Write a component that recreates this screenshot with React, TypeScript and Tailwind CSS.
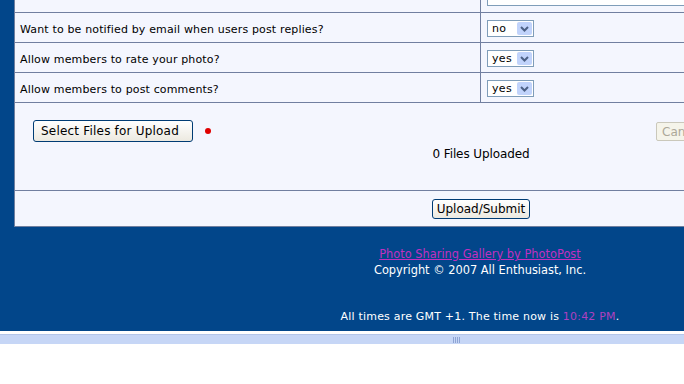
import React from "react";

const verd = { fontFamily: '"DejaVu Sans", Verdana, sans-serif' };
const tah = { fontFamily: '"DejaVu Sans", Tahoma, sans-serif' };

function Sel({ v }: { v: string }) {
  return (
    <div className="flex h-[17px] w-[47px] items-center border border-[#7f9db9] bg-white">
      <span className="flex-1 pl-[4px] text-[11px] leading-none tracking-[0.3px] text-black" style={verd}>
        {v}
      </span>
      <span className="mr-[1px] flex h-[13px] w-[15px] items-center justify-center rounded-[2px] bg-[#c1d3fb]">
        <svg width="9" height="6" viewBox="0 0 9 6">
          <path d="M1 1 L4.5 4.5 L8 1" stroke="#4d6185" strokeWidth="2" fill="none" />
        </svg>
      </span>
    </div>
  );
}

function Row({ label, v }: { label: string; v: string }) {
  return (
    <div className="flex h-[30px] border-b border-[#717fa0]">
      <div
        className="flex w-[466px] items-center border-r border-[#717fa0] pl-[5px] pt-[5px] text-[11px] tracking-[0.15px] text-black"
        style={verd}
      >
        {label}
      </div>
      <div className="flex flex-1 items-center pl-[6px] pt-[2px]">
        <Sel v={v} />
      </div>
    </div>
  );
}

export default function App() {
  return (
    <div className="h-[384px] w-[684px] overflow-hidden bg-white">
      <div className="w-[960px] bg-[#02468a] px-[14px]">
        <div className="border-b border-l border-[#6f7f9f] bg-[#f4f6fe]">
          <div className="flex h-[13px] border-b border-[#717fa0]">
            <div className="w-[466px] border-r border-[#717fa0]" />
            <div className="flex-1 pl-[6px]">
              <div className="h-[6px] border-x border-b border-[#7f9db9] bg-white" />
            </div>
          </div>
          <Row label="Want to be notified by email when users post replies?" v="no" />
          <Row label="Allow members to rate your photo?" v="yes" />
          <Row label="Allow members to post comments?" v="yes" />
          <div className="relative h-[88px] border-b border-[#717fa0]">
            <div className="flex items-center pl-[18px] pt-[17px]">
              <button
                className="h-[22px] w-[160px] rounded-[3px] border border-[#003c74] bg-gradient-to-b from-white to-[#ece9e0] pr-[6px] text-[12px] tracking-[0.2px] text-black"
                style={tah}
              >
                Select Files for Upload
              </button>
              <span className="ml-[12px] h-[6px] w-[6px] rounded-full bg-[#e00000]" />
            </div>
            <button
              className="absolute left-[641px] top-[19px] h-[19px] w-[60px] rounded-[2px] border border-[#cac8bb] bg-[#f5f4ea] pl-[5px] text-left text-[12px] text-[#aca899]"
              style={tah}
            >
              Cancel
            </button>
            <div className="mt-[3px] w-[932px] text-center text-[12px] tracking-[-0.1px] text-black" style={tah}>
              0 Files Uploaded
            </div>
          </div>
          <div className="flex h-[35px] w-[932px] items-start justify-center pt-[8px]">
            <button
              className="h-[20px] w-[98px] rounded-[3px] border border-[#003c74] bg-gradient-to-b from-white to-[#ece9e0] text-[12px] text-black"
              style={tah}
            >
              Upload/Submit
            </button>
          </div>
        </div>
        <div className="flex w-[932px] flex-col items-center pt-[19px] text-[11.4px]" style={tah}>
          <a className="leading-[16px] text-[#c030c0] underline">Photo Sharing Gallery by PhotoPost</a>
          <div className="leading-[16px] text-white">Copyright © 2007 All Enthusiast, Inc.</div>
          <div className="mt-[32px] text-[11px] leading-[14px] tracking-[0.2px] text-white" style={verd}>
            All times are GMT +1. The time now is <span className="text-[#b040c0]">10:42 PM</span>.
          </div>
          <div className="h-[7px]" />
        </div>
      </div>
      <div className="h-[3px] bg-white" />
      <div className="relative h-[10px] w-[684px] border-t border-[#b4c6ea] bg-[#c6d6f6]">
        <div className="absolute left-[453px] top-[2px] flex gap-[1px]">
          <span className="h-[6px] w-[1px] bg-[#8ea4d4]" />
          <span className="h-[6px] w-[1px] bg-[#8ea4d4]" />
          <span className="h-[6px] w-[1px] bg-[#8ea4d4]" />
          <span className="h-[6px] w-[1px] bg-[#8ea4d4]" />
        </div>
      </div>
    </div>
  );
}
